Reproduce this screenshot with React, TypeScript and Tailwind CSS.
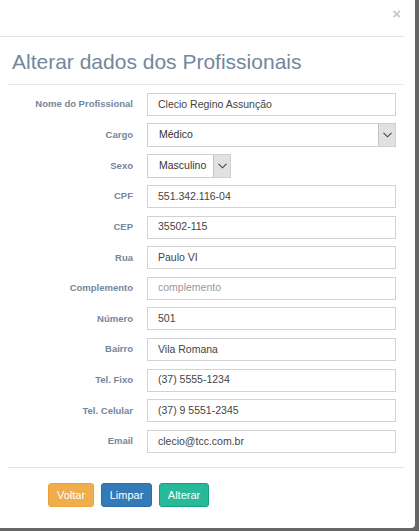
import React from "react";

interface Campo {
  label: string;
  value?: string;
  placeholder?: string;
  tipo?: "select" | "selectCurto";
}

const campos: Campo[] = [
  { label: "Nome do Profissional", value: "Clecio Regino Assunção" },
  { label: "Cargo", value: "Médico", tipo: "select" },
  { label: "Sexo", value: "Masculino", tipo: "selectCurto" },
  { label: "CPF", value: "551.342.116-04" },
  { label: "CEP", value: "35502-115" },
  { label: "Rua", value: "Paulo VI" },
  { label: "Complemento", placeholder: "complemento" },
  { label: "Número", value: "501" },
  { label: "Bairro", value: "Vila Romana" },
  { label: "Tel. Fixo", value: "(37) 5555-1234" },
  { label: "Tel. Celular", value: "(37) 9 5551-2345" },
  { label: "Email", value: "clecio@tcc.com.br" },
];

const Seta: React.FC = () => (
  <div className="flex h-full w-[17px] items-center justify-center border-l border-[#c4c4c4] bg-[#e1e1e1]">
    <svg width="9" height="6" viewBox="0 0 9 6" fill="none">
      <path d="M0.5 0.8 L4.5 4.8 L8.5 0.8" stroke="#444" strokeWidth="1.1" />
    </svg>
  </div>
);

const App: React.FC = () => {
  return (
    <div className="h-[531px] w-[419px] overflow-hidden bg-[#666] font-['Liberation_Sans',Arial,sans-serif]">
      <div className="h-[528px] w-[415px] rounded-br-[4px] bg-white">
        <div className="mr-[11px] flex h-[37px] items-start justify-end border-b border-[#e5e5e5] pr-[3px] pt-[5px]">
          <span className="text-[15px] font-bold leading-[18px] text-[#c8c8c8]">×</span>
        </div>
        <div className="mx-[8px] mr-[11px]">
          <h4 className="mt-[11px] border-b border-[#e6e9ed] pb-[8px] pl-[4px] text-[21px] leading-[28px] text-[#73879c]">
            Alterar dados dos Profissionais
          </h4>
          <div className="flex flex-col gap-[7.64px] pt-[8px]">
            {campos.map((campo, i) => (
              <div key={i} className="flex h-[23px] items-center">
                <label className="w-[125px] shrink-0 text-right text-[9.5px] font-bold text-[#73879c]">
                  {campo.label}
                </label>
                <div className="ml-[14px] flex-1 pr-[8px]">
                  {campo.tipo ? (
                    <div
                      className={
                        campo.tipo === "select"
                          ? "flex h-[24px] w-full items-center border border-[#cfcfcf] text-[10.5px] text-[#333]"
                          : "flex h-[24px] w-[84px] items-center border border-[#cfcfcf] text-[10.5px] text-[#333]"
                      }
                    >
                      <span className="flex-1 pl-[11px]">{campo.value}</span>
                      <Seta />
                    </div>
                  ) : (
                    <div className="flex h-[23px] w-full items-center border border-[#d2d2d2] pl-[10px] text-[10.5px]">
                      {campo.value ? (
                        <span className="text-[#444]">{campo.value}</span>
                      ) : (
                        <span className="text-[#999]">{campo.placeholder}</span>
                      )}
                    </div>
                  )}
                </div>
              </div>
            ))}
          </div>
          <div className="mt-[14px] flex gap-[7px] border-t border-[#e5e5e5] pl-[40px] pt-[15px]">
            <button className="h-[24px] w-[46px] rounded-[3px] border border-[#eea236] bg-[#f0ad4e] text-[11px] text-white">
              Voltar
            </button>
            <button className="h-[24px] w-[51px] rounded-[3px] border border-[#2e6da4] bg-[#337ab7] text-[11px] text-white">
              Limpar
            </button>
            <button className="h-[24px] w-[50px] rounded-[3px] border border-[#169f85] bg-[#26b99a] text-[11px] text-white">
              Alterar
            </button>
          </div>
        </div>
      </div>
    </div>
  );
};

export default App;
